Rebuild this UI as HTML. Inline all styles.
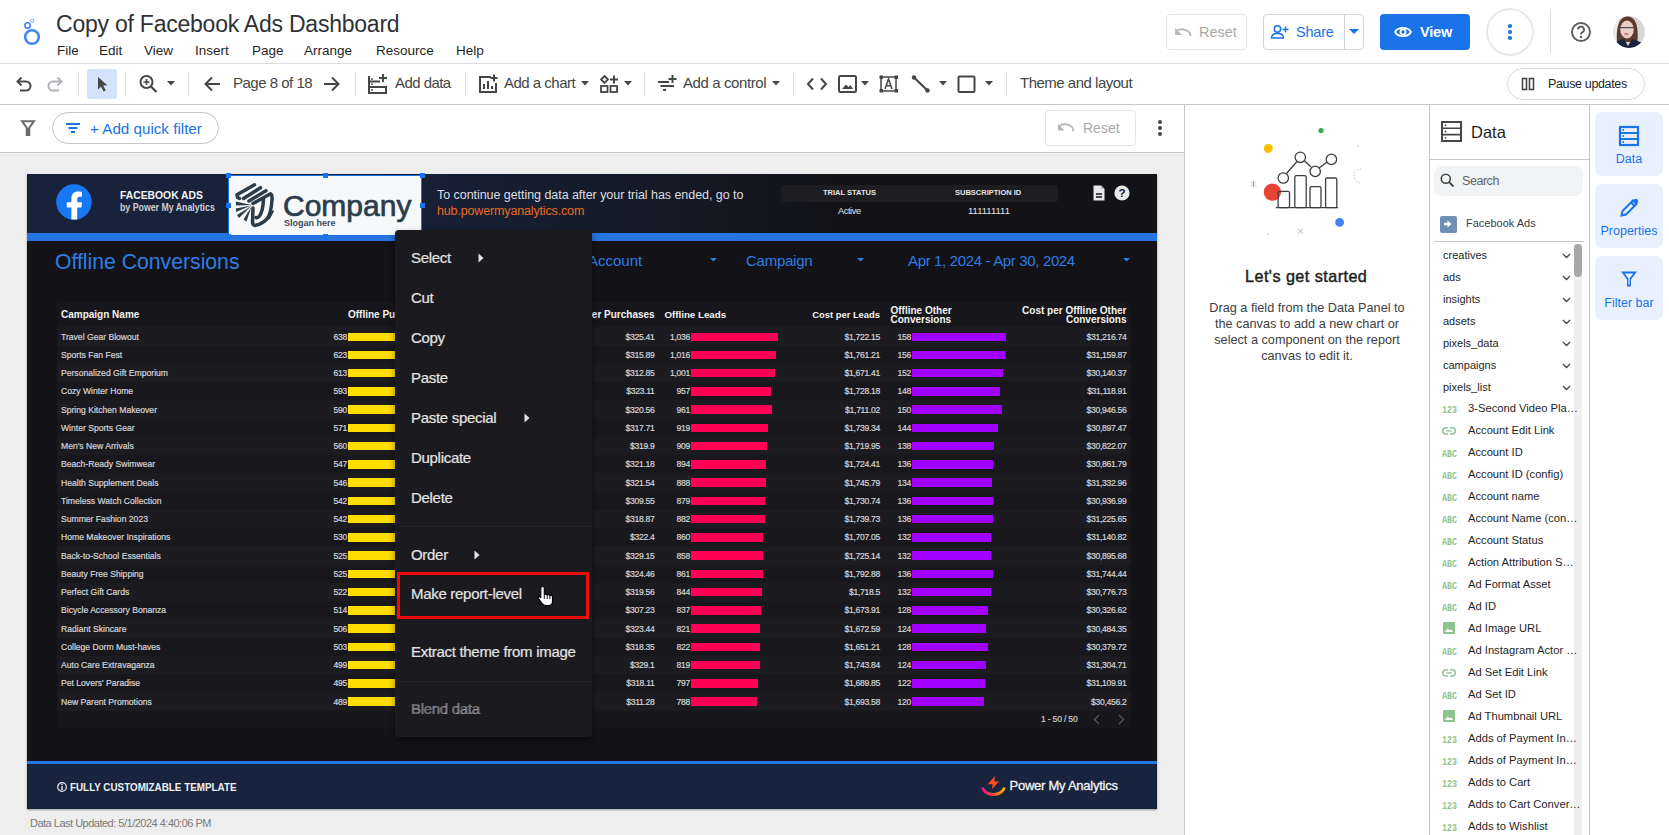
<!DOCTYPE html>
<html><head><meta charset="utf-8">
<style>
*{box-sizing:border-box;margin:0;padding:0}
html,body{width:1669px;height:835px;overflow:hidden;background:#fff;font-family:"Liberation Sans",sans-serif;color:#1f1f1f}
.a{position:absolute;white-space:nowrap;line-height:1}
svg{position:absolute;overflow:visible}
.tb{color:#444746;font-size:15px}
.sep{position:absolute;width:1px;background:#dadce0;top:72px;height:24px}
.hline{position:absolute;height:1px}
.vline{position:absolute;width:1px;background:#c4c7c5}
.r{text-align:right}
.t{color:#d4d4d8;font-size:8.6px;-webkit-text-stroke:0.2px #d4d4d8}
.h{color:#f2f2f2;font-size:9.8px;font-weight:bold}
.mi{position:absolute;left:411px;color:#e3e3e3;font-size:15px;letter-spacing:-0.3px;-webkit-text-stroke:0.2px #e3e3e3;line-height:1;white-space:nowrap}
.fl{position:absolute;left:1468px;font-size:11.2px;color:#1f1f1f;line-height:1;white-space:nowrap}
.gr{position:absolute;left:1443px;font-size:11px;color:#1f1f1f;line-height:1;white-space:nowrap}
</style></head><body>

<!-- ===== HEADER ===== -->
<svg style="left:0;top:0" width="60" height="60">
<circle cx="32" cy="37" r="6.8" fill="none" stroke="#4285f4" stroke-width="2.6"/>
<circle cx="27.5" cy="25.4" r="2.7" fill="none" stroke="#4285f4" stroke-width="1.6"/>
<circle cx="32.2" cy="20.8" r="1.6" fill="none" stroke="#8ab4f8" stroke-width="1.1"/>
</svg>
<div class="a" id="title" style="left:56px;top:13px;font-size:23px;letter-spacing:-0.23px;color:#303134">Copy of Facebook Ads Dashboard</div>
<div class="a" style="left:57px;top:43.5px;font-size:13.5px;color:#1f1f1f">File</div>
<div class="a" style="left:99px;top:43.5px;font-size:13.5px;color:#1f1f1f">Edit</div>
<div class="a" style="left:144px;top:43.5px;font-size:13.5px;color:#1f1f1f">View</div>
<div class="a" style="left:195px;top:43.5px;font-size:13.5px;color:#1f1f1f">Insert</div>
<div class="a" style="left:252px;top:43.5px;font-size:13.5px;color:#1f1f1f">Page</div>
<div class="a" style="left:304px;top:43.5px;font-size:13.5px;color:#1f1f1f">Arrange</div>
<div class="a" style="left:376px;top:43.5px;font-size:13.5px;color:#1f1f1f">Resource</div>
<div class="a" style="left:456px;top:43.5px;font-size:13.5px;color:#1f1f1f">Help</div>

<!-- header right buttons -->
<div class="a" style="left:1166px;top:14px;width:81px;height:36px;border:1px solid #e3e3e3;border-radius:4px"></div>
<svg style="left:1174px;top:26px" width="18" height="12"><path d="M2.5 4.8 a8.5 6.2 0 0 1 13.8 5.4" fill="none" stroke="#b9b9b9" stroke-width="1.9"/><path d="M1 2 V9 H8 z" fill="#b9b9b9"/></svg>
<div class="a" style="left:1199px;top:25px;font-size:14.5px;color:#a9a9a9">Reset</div>
<div class="a" style="left:1263px;top:14px;width:101px;height:36px;border:1px solid #d2d5da;border-radius:4px"></div>
<div class="a" style="left:1344px;top:14px;width:1px;height:36px;background:#d2d5da"></div>
<svg style="left:1270px;top:24px" width="20" height="16"><circle cx="7.5" cy="5" r="3.2" fill="none" stroke="#1a73e8" stroke-width="1.5"/><path d="M1.5 14 c0-3.3 3-4.5 6-4.5 s6 1.2 6 4.5 z" fill="none" stroke="#1a73e8" stroke-width="1.5"/><path d="M15.5 2.5 v6 M12.5 5.5 h6" stroke="#1a73e8" stroke-width="1.5"/></svg>
<div class="a" style="left:1296px;top:25px;font-size:14.5px;letter-spacing:-0.2px;color:#1a73e8">Share</div>
<svg style="left:1349px;top:29px" width="10" height="6"><path d="M0 0 H10 L5 5 z" fill="#1a73e8"/></svg>
<div class="a" style="left:1380px;top:14px;width:90px;height:36px;background:#1a73e8;border-radius:4px"></div>
<svg style="left:1394px;top:26px" width="18" height="12"><path d="M1 6 C4 0.5 14 0.5 17 6 C14 11.5 4 11.5 1 6 z" fill="none" stroke="#fff" stroke-width="1.7"/><circle cx="9" cy="6" r="2.6" fill="none" stroke="#fff" stroke-width="1.7"/></svg>
<div class="a" style="left:1420px;top:25px;font-size:14.5px;letter-spacing:-0.2px;color:#fff;font-weight:bold">View</div>
<div class="a" style="left:1486px;top:8px;width:48px;height:48px;border:2px solid #e8e8e8;border-radius:50%"></div>
<svg style="left:1506px;top:22px" width="8" height="20"><circle cx="4" cy="4" r="2.1" fill="#1a73e8"/><circle cx="4" cy="10" r="2.1" fill="#1a73e8"/><circle cx="4" cy="16" r="2.1" fill="#1a73e8"/></svg>
<div class="a" style="left:1550px;top:9px;width:1px;height:45px;background:#dadce0"></div>
<svg style="left:1570px;top:21px" width="22" height="22"><circle cx="11" cy="11" r="9" fill="none" stroke="#5a5c5f" stroke-width="1.9"/><path d="M8 8.6 a3 3 0 1 1 4.4 2.6 c-1 .6-1.4 1.1-1.4 2.3" fill="none" stroke="#5a5c5f" stroke-width="1.9"/><circle cx="11" cy="16" r="1.2" fill="#5a5c5f"/></svg>
<svg style="left:1613px;top:16px" width="32" height="32"><defs><clipPath id="av"><circle cx="16" cy="16" r="15.9"/></clipPath></defs><g clip-path="url(#av)"><rect width="32" height="32" fill="#d9d6d3"/><rect x="0" y="0" width="6" height="32" fill="#ecebea"/><path d="M4 26 C3 14 5 1 14 0.5 C23 0.5 25.5 10 24.5 26 z" fill="#5c3a2e"/><ellipse cx="14" cy="13.5" rx="6.8" ry="9" fill="#e8cfc8"/><path d="M7 11.7 H21" stroke="#4d4d55" stroke-width="1.2"/><ellipse cx="13.5" cy="18" rx="2.2" ry="1.2" fill="#dd7872"/><path d="M0 33 V28 C4 25 8 23 11 23 L15 30 L19 23 C23 24 27 26 32 28 V33 z" fill="#1c2340"/></g></svg>
<div class="hline" style="left:0;top:63px;width:1669px;background:#dadce0"></div>

<!-- ===== TOOLBAR ===== -->

<svg style="left:14px;top:72.5px" width="20" height="20"><path d="M3.5 8.5 H12 a4.5 4.5 0 0 1 0 9 H6" fill="none" stroke="#474a4d" stroke-width="2"/><path d="M7.5 4.5 L3.5 8.5 L7.5 12.5" fill="none" stroke="#474a4d" stroke-width="2"/></svg>
<svg style="left:45px;top:72.5px" width="20" height="20"><path d="M16.5 8.5 H8 a4.5 4.5 0 0 0 0 9 H14" fill="none" stroke="#b0b3b8" stroke-width="2"/><path d="M12.5 4.5 L16.5 8.5 L12.5 12.5" fill="none" stroke="#b0b3b8" stroke-width="2"/></svg>
<div class="sep" style="left:78px"></div>
<div class="a" style="left:87px;top:69px;width:30px;height:30px;background:#d3e3fd;border-radius:3px"></div>
<svg style="left:94px;top:76px" width="16" height="16"><path d="M4 1 V13.5 L7 10.5 L9.6 15.5 L11.8 14.5 L9.2 9.6 L13.3 9.3 z" fill="#444746"/></svg>
<div class="sep" style="left:125px"></div>
<svg style="left:138px;top:74px" width="22" height="20"><circle cx="8.5" cy="8" r="6" fill="none" stroke="#444746" stroke-width="2"/><path d="M13 12.5 L18.5 18" stroke="#444746" stroke-width="2.2"/><path d="M8.5 5 V11 M5.5 8 H11.5" stroke="#444746" stroke-width="1.7"/></svg>
<svg style="left:167px;top:81px" width="9" height="5"><path d="M0 0 H8 L4 4.5 z" fill="#444746"/></svg>
<div class="sep" style="left:188px"></div>
<svg style="left:202px;top:74px" width="20" height="20"><path d="M18 10 H4 M10 3.5 L3.5 10 L10 16.5" fill="none" stroke="#444746" stroke-width="2"/></svg>
<div class="a tb" style="left:233px;top:75px;font-size:15px;letter-spacing:-0.5px">Page 8 of 18</div>
<svg style="left:322px;top:74px" width="20" height="20"><path d="M2 10 H16 M10 3.5 L16.5 10 L10 16.5" fill="none" stroke="#444746" stroke-width="2"/></svg>
<div class="sep" style="left:355px"></div>
<svg style="left:367px;top:73px" width="22" height="22"><path d="M2 3 V20 H19 V14 H2 M2 8.5 H13 M2 14 H19" fill="none" stroke="#444746" stroke-width="2"/><path d="M16 1 V9 M12 5 H20" stroke="#444746" stroke-width="2"/><circle cx="5" cy="6" r=".9" fill="#444746"/><circle cx="5" cy="11.2" r=".9" fill="#444746"/><circle cx="5" cy="17" r=".9" fill="#444746"/></svg>
<div class="a tb" style="left:395px;top:75px;font-size:15px;letter-spacing:-0.55px">Add data</div>
<div class="sep" style="left:465px"></div>
<svg style="left:478px;top:74px" width="22" height="20"><path d="M13 3 H2 V18 H18 V9" fill="none" stroke="#444746" stroke-width="2"/><path d="M6 15 V10 M10 15 V7 M14 15 V12" stroke="#444746" stroke-width="2"/><path d="M16 0.5 V7.5 M12.5 4 H19.5" stroke="#444746" stroke-width="2"/></svg>
<div class="a tb" style="left:504px;top:75px;font-size:15px;letter-spacing:-0.5px">Add a chart</div>
<svg style="left:581px;top:81px" width="9" height="5"><path d="M0 0 H8 L4 4.5 z" fill="#444746"/></svg>
<svg style="left:600px;top:75px" width="20" height="18"><path d="M4.5 1 L8 4.5 L4.5 8 L1 4.5 z" fill="none" stroke="#444746" stroke-width="1.8"/><path d="M14 0.5 V8.5 M10 4.5 H18" stroke="#444746" stroke-width="2"/><rect x="1" y="11" width="6.5" height="6" fill="none" stroke="#444746" stroke-width="1.8"/><rect x="10.5" y="11" width="6.5" height="6" fill="none" stroke="#444746" stroke-width="1.8"/></svg>
<svg style="left:624px;top:81px" width="9" height="5"><path d="M0 0 H8 L4 4.5 z" fill="#444746"/></svg>
<div class="sep" style="left:644px"></div>
<svg style="left:657px;top:74px" width="22" height="20"><path d="M1 8 H12 M3.5 12 H12 M6 16 H9" stroke="#444746" stroke-width="2"/><path d="M15.5 1 V9 M11.5 5 H19.5" stroke="#444746" stroke-width="2"/><path d="M12 12 H17" stroke="#444746" stroke-width="2"/></svg>
<div class="a tb" style="left:683px;top:75px;font-size:15px;letter-spacing:-0.4px">Add a control</div>
<svg style="left:772px;top:81px" width="9" height="5"><path d="M0 0 H8 L4 4.5 z" fill="#444746"/></svg>
<div class="sep" style="left:793px"></div>
<svg style="left:806px;top:77px" width="22" height="14"><path d="M7 1.5 L2 7 L7 12.5 M15 1.5 L20 7 L15 12.5" fill="none" stroke="#444746" stroke-width="2"/></svg>
<svg style="left:838px;top:75px" width="20" height="18"><rect x="1" y="1" width="17" height="16" rx="1.5" fill="none" stroke="#444746" stroke-width="2"/><path d="M4 14 L8 9.5 L10.5 12 L12.5 10 L15 14 z" fill="#444746"/></svg>
<svg style="left:861px;top:81px" width="9" height="5"><path d="M0 0 H8 L4 4.5 z" fill="#444746"/></svg>
<svg style="left:879px;top:75px" width="20" height="18"><rect x="2" y="2" width="15" height="14" fill="none" stroke="#444746" stroke-width="1.5"/><rect x="0.5" y="0.5" width="3.5" height="3.5" fill="#444746"/><rect x="15.5" y="0.5" width="3.5" height="3.5" fill="#444746"/><rect x="0.5" y="14" width="3.5" height="3.5" fill="#444746"/><rect x="15.5" y="14" width="3.5" height="3.5" fill="#444746"/><path d="M6 14 L9.5 4 L13 14 M7.2 10.8 H11.8" fill="none" stroke="#444746" stroke-width="1.5"/></svg>
<svg style="left:911px;top:75px" width="20" height="18"><path d="M3 2.5 L16.5 15.5" stroke="#444746" stroke-width="2.2"/><circle cx="3" cy="2.5" r="2.2" fill="#444746"/><circle cx="16.5" cy="15.5" r="2.2" fill="#444746"/></svg>
<svg style="left:939px;top:81px" width="9" height="5"><path d="M0 0 H8 L4 4.5 z" fill="#444746"/></svg>
<svg style="left:957px;top:75px" width="20" height="18"><rect x="1.5" y="1.5" width="16" height="15.5" rx="1" fill="none" stroke="#444746" stroke-width="2"/></svg>
<svg style="left:985px;top:81px" width="9" height="5"><path d="M0 0 H8 L4 4.5 z" fill="#444746"/></svg>
<div class="sep" style="left:1006px"></div>
<div class="a tb" style="left:1020px;top:75px;font-size:15px;letter-spacing:-0.5px">Theme and layout</div>
<div class="a" style="left:1507px;top:68px;width:138px;height:32px;border:1px solid #dadce0;border-radius:16px"></div>
<svg style="left:1521px;top:77px" width="14" height="14"><rect x="1.5" y="1.5" width="4" height="11" fill="none" stroke="#444746" stroke-width="1.6"/><rect x="8.5" y="1.5" width="4" height="11" fill="none" stroke="#444746" stroke-width="1.6"/></svg>
<div class="a" style="left:1548px;top:77.5px;font-size:12.5px;color:#1f1f1f;letter-spacing:-0.35px">Pause updates</div>

<div class="hline" style="left:0;top:104px;width:1669px;background:#c4c7c5"></div>



<svg style="left:20px;top:120px" width="16" height="16"><path d="M2 1.2 H14 L9.3 7.6 V15 H6.7 V7.6 z" fill="none" stroke="#6b6d70" stroke-width="2" stroke-linejoin="miter"/><rect x="6.7" y="8" width="2.6" height="7.6" fill="#6b6d70"/></svg>
<div class="a" style="left:52px;top:112px;width:167px;height:32px;border:1px solid #c4c7c5;border-radius:16px"></div>
<svg style="left:66px;top:123px" width="15" height="11"><path d="M0 1 H14 M2.5 5 H11.5 M5 9 H9" stroke="#1a73e8" stroke-width="1.8"/></svg>
<div class="a" style="left:90px;top:120.8px;font-size:15.2px;color:#1a73e8">+ Add quick filter</div>
<div class="a" style="left:1045px;top:110px;width:91px;height:36px;border:1px solid #e3e3e3;border-radius:4px"></div>
<svg style="left:1057px;top:122px" width="18" height="12"><path d="M2 4.5 a8 6 0 0 1 14 5" fill="none" stroke="#b5b5b5" stroke-width="1.8"/><path d="M1 2 V8.5 H7.5 z" fill="#b5b5b5"/></svg>
<div class="a" style="left:1083px;top:121px;font-size:14px;color:#a9a9a9">Reset</div>
<svg style="left:1156px;top:119px" width="8" height="18"><circle cx="4" cy="2.9" r="2" fill="#444746"/><circle cx="4" cy="9" r="2" fill="#444746"/><circle cx="4" cy="15" r="2" fill="#444746"/></svg>
<div class="hline" style="left:0;top:152px;width:1184px;background:#c4c7c5"></div>


<div class="a" style="left:0;top:153px;width:1184px;height:682px;background:#eeeeee"></div>
<div class="a" style="left:27px;top:174px;width:1130px;height:635px;background:#131317;box-shadow:0 1px 2px rgba(0,0,0,.35)"></div>
<div class="a" style="left:27px;top:174px;width:1130px;height:59px;background:linear-gradient(90deg,#18233b 0%,#18233b 25%,#141a28 55%,#131317 72%,#131317 100%)"></div>
<div class="a" style="left:27px;top:233px;width:1130px;height:8px;background:#2574e0"></div>
<div class="a" style="left:27px;top:761px;width:1130px;height:3px;background:#2574e0"></div>
<div class="a" style="left:27px;top:764px;width:1130px;height:45px;background:#18243e"></div>
<div class="a" style="left:30px;top:818px;font-size:11px;letter-spacing:-0.5px;color:#7a7a7a">Data Last Updated: 5/1/2024 4:40:06 PM</div>


<svg style="left:56px;top:184px" width="36" height="36"><circle cx="18" cy="18" r="17.8" fill="#1877f2"/><path d="M21.2 35.6 V23.5 H25.4 L26 18.3 H21.2 V15.3 C21.2 13.8 21.8 12.8 23.8 12.8 H26 V8 C25.4 7.8 23.8 7.6 22 7.6 C18 7.6 15.4 10 15.4 14.3 V18.3 H10.8 V23.5 H15.4 V35.6 z" fill="#fff"/></svg>
<div class="a" style="left:120px;top:189px;font-size:11.7px;font-weight:bold;transform:scaleX(0.885);transform-origin:0 0;color:#f4f5f7">FACEBOOK ADS</div>
<div class="a" style="left:120px;top:202.5px;font-size:10.4px;font-weight:bold;transform:scaleX(0.845);transform-origin:0 0;color:#c9ced8">by Power My Analytics</div>
<div class="a" style="left:228px;top:175px;width:194px;height:61px;background:#f7f8fa;border:1px solid #1a73e8"></div>
<svg style="left:230px;top:178px" width="50" height="54"><g fill="none" stroke="#2b3d4a" stroke-width="3.5" stroke-linecap="round" stroke-linejoin="round">
<path d="M24.5 6.8 L7 16.8 L7.6 19.5 L9.5 20.5"/><path d="M30.5 9.7 L13.5 20.5"/><path d="M36 12.8 L19 23"/>
<path d="M23 25.5 L40.5 15.8 Q42.5 17 42 22 Q41 36 37 41 Q32 46 25 47.5 Q22.5 47 22.5 44 L23 30"/>
<path d="M33.5 21 Q33 33 29.5 38 Q27.5 40.5 26 39.5"/>
<path d="M42.5 33.5 L39 40" stroke-width="2.6"/>
</g><g fill="#2b3d4a"><path d="M21.3 27 L6 23.5 L5.8 27.5 z"/><path d="M21.3 27.5 L5.8 30.5 L6 34 z"/><path d="M21.3 28 L7 37 L9 40 z"/><path d="M21.5 28.5 L13.5 41.5 L16.5 43.5 z"/></g></svg>
<div class="a" style="left:283px;top:190.5px;font-size:30px;-webkit-text-stroke:0.7px #2b3d4a;color:#2b3d4a">Company</div>
<div class="a" style="left:284px;top:219px;font-size:9px;font-weight:bold;color:#3d4b57">Slogan here</div>

<div class="a" style="left:225.5px;top:172.5px;width:5px;height:5px;background:#1a73e8"></div>
<div class="a" style="left:322.5px;top:172.5px;width:5px;height:5px;background:#1a73e8"></div>
<div class="a" style="left:419.5px;top:172.5px;width:5px;height:5px;background:#1a73e8"></div>
<div class="a" style="left:225.5px;top:203.0px;width:5px;height:5px;background:#1a73e8"></div>
<div class="a" style="left:419.5px;top:203.0px;width:5px;height:5px;background:#1a73e8"></div>
<div class="a" style="left:225.5px;top:233.5px;width:5px;height:5px;background:#1a73e8"></div>
<div class="a" style="left:322.5px;top:233.5px;width:5px;height:5px;background:#1a73e8"></div>
<div class="a" style="left:419.5px;top:233.5px;width:5px;height:5px;background:#1a73e8"></div>

<div class="a" style="left:437px;top:188.5px;font-size:12.5px;letter-spacing:-0.05px;color:#dcdee3">To continue getting data after your trial has ended, go to</div>
<div class="a" style="left:437px;top:204.5px;font-size:12.5px;letter-spacing:-0.15px;color:#ea6a25">hub.powermyanalytics.com</div>
<div class="a" style="left:781px;top:185px;width:277px;height:17px;background:#1d1d22;border-radius:3px"></div>
<div class="a" style="left:823px;top:189px;font-size:7.5px;font-weight:bold;color:#e6e6e6">TRIAL STATUS</div>
<div class="a" style="left:955px;top:189px;font-size:7.5px;font-weight:bold;color:#e6e6e6">SUBSCRIPTION ID</div>
<div class="a" style="left:838px;top:207px;font-size:9.2px;letter-spacing:-0.4px;color:#e6e6e6">Active</div>
<div class="a" style="left:968px;top:206.2px;font-size:9.5px;color:#e6e6e6">111111111</div>
<svg style="left:1093px;top:185px" width="12" height="16"><path d="M0.5 0.5 H8 L11.5 4 V15.5 H0.5 z" fill="#e9e9e9"/><path d="M8 0.5 V4 H11.5" fill="#bbb"/><path d="M3 9 H9 M3 12 H9" stroke="#131317" stroke-width="1.4"/></svg>
<svg style="left:1114px;top:185px" width="16" height="16"><circle cx="8" cy="8" r="7.6" fill="#e9e9e9"/><text x="8" y="12.3" font-size="11.5" font-weight="bold" font-family="Liberation Sans" text-anchor="middle" fill="#131317">?</text></svg>


<div class="a" style="left:55px;top:251px;font-size:21.2px;color:#2e7de2">Offline Conversions</div>
<div class="a" style="left:588px;top:252.7px;font-size:15px;letter-spacing:0px;color:#2e7de2">Account</div>
<svg style="left:710px;top:258px" width="8" height="4"><path d="M0 0 H7 L3.5 3.5 z" fill="#2e7de2"/></svg>
<div class="a" style="left:746px;top:252.7px;font-size:15px;letter-spacing:-0.25px;color:#2e7de2">Campaign</div>
<svg style="left:857px;top:258px" width="8" height="4"><path d="M0 0 H7 L3.5 3.5 z" fill="#2e7de2"/></svg>
<div class="a" style="left:908px;top:252.7px;font-size:15px;letter-spacing:-0.35px;color:#2e7de2">Apr 1, 2024 - Apr 30, 2024</div>
<svg style="left:1123px;top:258px" width="8" height="4"><path d="M0 0 H7 L3.5 3.5 z" fill="#2e7de2"/></svg>

<div class="a" style="left:57px;top:302px;width:1074px;height:426px;background:#17171b;border-radius:3px"></div>
<div class="a h" style="left:61px;top:310.1px;font-size:10px">Campaign Name</div>
<div class="a h" style="left:348px;top:310.1px;font-size:10px">Offline Purchases</div>
<div class="a h r" style="left:554.7px;width:100px;top:310.1px;font-size:10px">Cost per Purchases</div>
<div class="a h" style="left:664.4px;top:310.3px;font-size:9.75px">Offline Leads</div>
<div class="a h r" style="left:760px;width:120px;top:309.5px;font-size:9.4px">Cost per Leads</div>
<div class="a h" style="left:890.5px;top:307.3px;font-size:10px;line-height:8.6px">Offline Other<br>Conversions</div>
<div class="a h r" style="left:980px;width:146.5px;top:307.3px;font-size:10px;line-height:8.6px">Cost per Offline Other<br>Conversions</div>
<div class="a" style="left:57px;top:327.40px;width:1074px;height:18.25px;background:#1b1b20"></div>
<div class="a t" style="left:61px;top:332.60px;">Travel Gear Blowout</div>
<div class="a t r" style="left:297px;width:50px;top:332.60px;letter-spacing:-0.3px">638</div>
<div class="a" style="left:348.4px;top:332.50px;width:60px;height:8.5px;background:#ffdd00"></div>
<div class="a t r" style="left:574.5px;width:80px;top:332.60px;letter-spacing:-0.3px">$325.41</div>
<div class="a t r" style="left:620px;width:70px;top:332.60px;letter-spacing:-0.3px">1,036</div>
<div class="a" style="left:691.2px;top:332.50px;width:86.8px;height:8.5px;background:#ff0055"></div>
<div class="a t r" style="left:800px;width:80px;top:332.60px;letter-spacing:-0.3px">$1,722.15</div>
<div class="a t r" style="left:860px;width:51px;top:332.60px;letter-spacing:-0.3px">158</div>
<div class="a" style="left:912.1px;top:332.50px;width:94.3px;height:8.5px;background:#a100ff"></div>
<div class="a t r" style="left:1026.5px;width:100px;top:332.60px;letter-spacing:-0.3px">$31,216.74</div>
<div class="a" style="left:57px;top:345.64px;width:1074px;height:18.25px;background:#18181c"></div>
<div class="a t" style="left:61px;top:350.84px;">Sports Fan Fest</div>
<div class="a t r" style="left:297px;width:50px;top:350.84px;letter-spacing:-0.3px">623</div>
<div class="a" style="left:348.4px;top:350.75px;width:60px;height:8.5px;background:#ffdd00"></div>
<div class="a t r" style="left:574.5px;width:80px;top:350.84px;letter-spacing:-0.3px">$315.89</div>
<div class="a t r" style="left:620px;width:70px;top:350.84px;letter-spacing:-0.3px">1,016</div>
<div class="a" style="left:691.2px;top:350.75px;width:85.1px;height:8.5px;background:#ff0055"></div>
<div class="a t r" style="left:800px;width:80px;top:350.84px;letter-spacing:-0.3px">$1,761.21</div>
<div class="a t r" style="left:860px;width:51px;top:350.84px;letter-spacing:-0.3px">156</div>
<div class="a" style="left:912.1px;top:350.75px;width:93.1px;height:8.5px;background:#a100ff"></div>
<div class="a t r" style="left:1026.5px;width:100px;top:350.84px;letter-spacing:-0.3px">$31,159.87</div>
<div class="a" style="left:57px;top:363.89px;width:1074px;height:18.25px;background:#1b1b20"></div>
<div class="a t" style="left:61px;top:369.09px;">Personalized Gift Emporium</div>
<div class="a t r" style="left:297px;width:50px;top:369.09px;letter-spacing:-0.3px">613</div>
<div class="a" style="left:348.4px;top:368.99px;width:60px;height:8.5px;background:#ffdd00"></div>
<div class="a t r" style="left:574.5px;width:80px;top:369.09px;letter-spacing:-0.3px">$312.85</div>
<div class="a t r" style="left:620px;width:70px;top:369.09px;letter-spacing:-0.3px">1,001</div>
<div class="a" style="left:691.2px;top:368.99px;width:83.9px;height:8.5px;background:#ff0055"></div>
<div class="a t r" style="left:800px;width:80px;top:369.09px;letter-spacing:-0.3px">$1,671.41</div>
<div class="a t r" style="left:860px;width:51px;top:369.09px;letter-spacing:-0.3px">152</div>
<div class="a" style="left:912.1px;top:368.99px;width:90.7px;height:8.5px;background:#a100ff"></div>
<div class="a t r" style="left:1026.5px;width:100px;top:369.09px;letter-spacing:-0.3px">$30,140.37</div>
<div class="a" style="left:57px;top:382.13px;width:1074px;height:18.25px;background:#18181c"></div>
<div class="a t" style="left:61px;top:387.33px;">Cozy Winter Home</div>
<div class="a t r" style="left:297px;width:50px;top:387.33px;letter-spacing:-0.3px">593</div>
<div class="a" style="left:348.4px;top:387.24px;width:60px;height:8.5px;background:#ffdd00"></div>
<div class="a t r" style="left:574.5px;width:80px;top:387.33px;letter-spacing:-0.3px">$323.11</div>
<div class="a t r" style="left:620px;width:70px;top:387.33px;letter-spacing:-0.3px">957</div>
<div class="a" style="left:691.2px;top:387.24px;width:80.2px;height:8.5px;background:#ff0055"></div>
<div class="a t r" style="left:800px;width:80px;top:387.33px;letter-spacing:-0.3px">$1,728.18</div>
<div class="a t r" style="left:860px;width:51px;top:387.33px;letter-spacing:-0.3px">148</div>
<div class="a" style="left:912.1px;top:387.24px;width:88.4px;height:8.5px;background:#a100ff"></div>
<div class="a t r" style="left:1026.5px;width:100px;top:387.33px;letter-spacing:-0.3px">$31,118.91</div>
<div class="a" style="left:57px;top:400.38px;width:1074px;height:18.25px;background:#1b1b20"></div>
<div class="a t" style="left:61px;top:405.58px;">Spring Kitchen Makeover</div>
<div class="a t r" style="left:297px;width:50px;top:405.58px;letter-spacing:-0.3px">590</div>
<div class="a" style="left:348.4px;top:405.48px;width:60px;height:8.5px;background:#ffdd00"></div>
<div class="a t r" style="left:574.5px;width:80px;top:405.58px;letter-spacing:-0.3px">$320.56</div>
<div class="a t r" style="left:620px;width:70px;top:405.58px;letter-spacing:-0.3px">961</div>
<div class="a" style="left:691.2px;top:405.48px;width:80.5px;height:8.5px;background:#ff0055"></div>
<div class="a t r" style="left:800px;width:80px;top:405.58px;letter-spacing:-0.3px">$1,711.02</div>
<div class="a t r" style="left:860px;width:51px;top:405.58px;letter-spacing:-0.3px">150</div>
<div class="a" style="left:912.1px;top:405.48px;width:89.5px;height:8.5px;background:#a100ff"></div>
<div class="a t r" style="left:1026.5px;width:100px;top:405.58px;letter-spacing:-0.3px">$30,946.56</div>
<div class="a" style="left:57px;top:418.62px;width:1074px;height:18.25px;background:#18181c"></div>
<div class="a t" style="left:61px;top:423.82px;">Winter Sports Gear</div>
<div class="a t r" style="left:297px;width:50px;top:423.82px;letter-spacing:-0.3px">571</div>
<div class="a" style="left:348.4px;top:423.73px;width:60px;height:8.5px;background:#ffdd00"></div>
<div class="a t r" style="left:574.5px;width:80px;top:423.82px;letter-spacing:-0.3px">$317.71</div>
<div class="a t r" style="left:620px;width:70px;top:423.82px;letter-spacing:-0.3px">919</div>
<div class="a" style="left:691.2px;top:423.73px;width:77.0px;height:8.5px;background:#ff0055"></div>
<div class="a t r" style="left:800px;width:80px;top:423.82px;letter-spacing:-0.3px">$1,739.34</div>
<div class="a t r" style="left:860px;width:51px;top:423.82px;letter-spacing:-0.3px">144</div>
<div class="a" style="left:912.1px;top:423.73px;width:86.0px;height:8.5px;background:#a100ff"></div>
<div class="a t r" style="left:1026.5px;width:100px;top:423.82px;letter-spacing:-0.3px">$30,897.47</div>
<div class="a" style="left:57px;top:436.87px;width:1074px;height:18.25px;background:#1b1b20"></div>
<div class="a t" style="left:61px;top:442.07px;">Men's New Arrivals</div>
<div class="a t r" style="left:297px;width:50px;top:442.07px;letter-spacing:-0.3px">560</div>
<div class="a" style="left:348.4px;top:441.97px;width:60px;height:8.5px;background:#ffdd00"></div>
<div class="a t r" style="left:574.5px;width:80px;top:442.07px;letter-spacing:-0.3px">$319.9</div>
<div class="a t r" style="left:620px;width:70px;top:442.07px;letter-spacing:-0.3px">909</div>
<div class="a" style="left:691.2px;top:441.97px;width:76.2px;height:8.5px;background:#ff0055"></div>
<div class="a t r" style="left:800px;width:80px;top:442.07px;letter-spacing:-0.3px">$1,719.95</div>
<div class="a t r" style="left:860px;width:51px;top:442.07px;letter-spacing:-0.3px">138</div>
<div class="a" style="left:912.1px;top:441.97px;width:82.4px;height:8.5px;background:#a100ff"></div>
<div class="a t r" style="left:1026.5px;width:100px;top:442.07px;letter-spacing:-0.3px">$30,822.07</div>
<div class="a" style="left:57px;top:455.12px;width:1074px;height:18.25px;background:#18181c"></div>
<div class="a t" style="left:61px;top:460.31px;">Beach-Ready Swimwear</div>
<div class="a t r" style="left:297px;width:50px;top:460.31px;letter-spacing:-0.3px">547</div>
<div class="a" style="left:348.4px;top:460.22px;width:60px;height:8.5px;background:#ffdd00"></div>
<div class="a t r" style="left:574.5px;width:80px;top:460.31px;letter-spacing:-0.3px">$321.18</div>
<div class="a t r" style="left:620px;width:70px;top:460.31px;letter-spacing:-0.3px">894</div>
<div class="a" style="left:691.2px;top:460.22px;width:74.9px;height:8.5px;background:#ff0055"></div>
<div class="a t r" style="left:800px;width:80px;top:460.31px;letter-spacing:-0.3px">$1,724.41</div>
<div class="a t r" style="left:860px;width:51px;top:460.31px;letter-spacing:-0.3px">136</div>
<div class="a" style="left:912.1px;top:460.22px;width:81.2px;height:8.5px;background:#a100ff"></div>
<div class="a t r" style="left:1026.5px;width:100px;top:460.31px;letter-spacing:-0.3px">$30,861.79</div>
<div class="a" style="left:57px;top:473.36px;width:1074px;height:18.25px;background:#1b1b20"></div>
<div class="a t" style="left:61px;top:478.56px;">Health Supplement Deals</div>
<div class="a t r" style="left:297px;width:50px;top:478.56px;letter-spacing:-0.3px">546</div>
<div class="a" style="left:348.4px;top:478.46px;width:60px;height:8.5px;background:#ffdd00"></div>
<div class="a t r" style="left:574.5px;width:80px;top:478.56px;letter-spacing:-0.3px">$321.54</div>
<div class="a t r" style="left:620px;width:70px;top:478.56px;letter-spacing:-0.3px">888</div>
<div class="a" style="left:691.2px;top:478.46px;width:74.4px;height:8.5px;background:#ff0055"></div>
<div class="a t r" style="left:800px;width:80px;top:478.56px;letter-spacing:-0.3px">$1,745.79</div>
<div class="a t r" style="left:860px;width:51px;top:478.56px;letter-spacing:-0.3px">134</div>
<div class="a" style="left:912.1px;top:478.46px;width:80.0px;height:8.5px;background:#a100ff"></div>
<div class="a t r" style="left:1026.5px;width:100px;top:478.56px;letter-spacing:-0.3px">$31,332.96</div>
<div class="a" style="left:57px;top:491.61px;width:1074px;height:18.25px;background:#18181c"></div>
<div class="a t" style="left:61px;top:496.81px;">Timeless Watch Collection</div>
<div class="a t r" style="left:297px;width:50px;top:496.81px;letter-spacing:-0.3px">542</div>
<div class="a" style="left:348.4px;top:496.71px;width:60px;height:8.5px;background:#ffdd00"></div>
<div class="a t r" style="left:574.5px;width:80px;top:496.81px;letter-spacing:-0.3px">$309.55</div>
<div class="a t r" style="left:620px;width:70px;top:496.81px;letter-spacing:-0.3px">879</div>
<div class="a" style="left:691.2px;top:496.71px;width:73.7px;height:8.5px;background:#ff0055"></div>
<div class="a t r" style="left:800px;width:80px;top:496.81px;letter-spacing:-0.3px">$1,730.74</div>
<div class="a t r" style="left:860px;width:51px;top:496.81px;letter-spacing:-0.3px">136</div>
<div class="a" style="left:912.1px;top:496.71px;width:81.2px;height:8.5px;background:#a100ff"></div>
<div class="a t r" style="left:1026.5px;width:100px;top:496.81px;letter-spacing:-0.3px">$30,936.99</div>
<div class="a" style="left:57px;top:509.85px;width:1074px;height:18.25px;background:#1b1b20"></div>
<div class="a t" style="left:61px;top:515.05px;">Summer Fashion 2023</div>
<div class="a t r" style="left:297px;width:50px;top:515.05px;letter-spacing:-0.3px">542</div>
<div class="a" style="left:348.4px;top:514.95px;width:60px;height:8.5px;background:#ffdd00"></div>
<div class="a t r" style="left:574.5px;width:80px;top:515.05px;letter-spacing:-0.3px">$318.87</div>
<div class="a t r" style="left:620px;width:70px;top:515.05px;letter-spacing:-0.3px">882</div>
<div class="a" style="left:691.2px;top:514.95px;width:73.9px;height:8.5px;background:#ff0055"></div>
<div class="a t r" style="left:800px;width:80px;top:515.05px;letter-spacing:-0.3px">$1,739.73</div>
<div class="a t r" style="left:860px;width:51px;top:515.05px;letter-spacing:-0.3px">136</div>
<div class="a" style="left:912.1px;top:514.95px;width:81.2px;height:8.5px;background:#a100ff"></div>
<div class="a t r" style="left:1026.5px;width:100px;top:515.05px;letter-spacing:-0.3px">$31,225.65</div>
<div class="a" style="left:57px;top:528.10px;width:1074px;height:18.25px;background:#18181c"></div>
<div class="a t" style="left:61px;top:533.30px;">Home Makeover Inspirations</div>
<div class="a t r" style="left:297px;width:50px;top:533.30px;letter-spacing:-0.3px">530</div>
<div class="a" style="left:348.4px;top:533.20px;width:60px;height:8.5px;background:#ffdd00"></div>
<div class="a t r" style="left:574.5px;width:80px;top:533.30px;letter-spacing:-0.3px">$322.4</div>
<div class="a t r" style="left:620px;width:70px;top:533.30px;letter-spacing:-0.3px">860</div>
<div class="a" style="left:691.2px;top:533.20px;width:72.1px;height:8.5px;background:#ff0055"></div>
<div class="a t r" style="left:800px;width:80px;top:533.30px;letter-spacing:-0.3px">$1,707.05</div>
<div class="a t r" style="left:860px;width:51px;top:533.30px;letter-spacing:-0.3px">132</div>
<div class="a" style="left:912.1px;top:533.20px;width:78.8px;height:8.5px;background:#a100ff"></div>
<div class="a t r" style="left:1026.5px;width:100px;top:533.30px;letter-spacing:-0.3px">$31,140.82</div>
<div class="a" style="left:57px;top:546.34px;width:1074px;height:18.25px;background:#1b1b20"></div>
<div class="a t" style="left:61px;top:551.54px;">Back-to-School Essentials</div>
<div class="a t r" style="left:297px;width:50px;top:551.54px;letter-spacing:-0.3px">525</div>
<div class="a" style="left:348.4px;top:551.44px;width:60px;height:8.5px;background:#ffdd00"></div>
<div class="a t r" style="left:574.5px;width:80px;top:551.54px;letter-spacing:-0.3px">$329.15</div>
<div class="a t r" style="left:620px;width:70px;top:551.54px;letter-spacing:-0.3px">858</div>
<div class="a" style="left:691.2px;top:551.44px;width:71.9px;height:8.5px;background:#ff0055"></div>
<div class="a t r" style="left:800px;width:80px;top:551.54px;letter-spacing:-0.3px">$1,725.14</div>
<div class="a t r" style="left:860px;width:51px;top:551.54px;letter-spacing:-0.3px">132</div>
<div class="a" style="left:912.1px;top:551.44px;width:78.8px;height:8.5px;background:#a100ff"></div>
<div class="a t r" style="left:1026.5px;width:100px;top:551.54px;letter-spacing:-0.3px">$30,895.68</div>
<div class="a" style="left:57px;top:564.59px;width:1074px;height:18.25px;background:#18181c"></div>
<div class="a t" style="left:61px;top:569.79px;">Beauty Free Shipping</div>
<div class="a t r" style="left:297px;width:50px;top:569.79px;letter-spacing:-0.3px">525</div>
<div class="a" style="left:348.4px;top:569.69px;width:60px;height:8.5px;background:#ffdd00"></div>
<div class="a t r" style="left:574.5px;width:80px;top:569.79px;letter-spacing:-0.3px">$324.46</div>
<div class="a t r" style="left:620px;width:70px;top:569.79px;letter-spacing:-0.3px">861</div>
<div class="a" style="left:691.2px;top:569.69px;width:72.2px;height:8.5px;background:#ff0055"></div>
<div class="a t r" style="left:800px;width:80px;top:569.79px;letter-spacing:-0.3px">$1,792.88</div>
<div class="a t r" style="left:860px;width:51px;top:569.79px;letter-spacing:-0.3px">136</div>
<div class="a" style="left:912.1px;top:569.69px;width:81.2px;height:8.5px;background:#a100ff"></div>
<div class="a t r" style="left:1026.5px;width:100px;top:569.79px;letter-spacing:-0.3px">$31,744.44</div>
<div class="a" style="left:57px;top:582.83px;width:1074px;height:18.25px;background:#1b1b20"></div>
<div class="a t" style="left:61px;top:588.03px;">Perfect Gift Cards</div>
<div class="a t r" style="left:297px;width:50px;top:588.03px;letter-spacing:-0.3px">522</div>
<div class="a" style="left:348.4px;top:587.93px;width:60px;height:8.5px;background:#ffdd00"></div>
<div class="a t r" style="left:574.5px;width:80px;top:588.03px;letter-spacing:-0.3px">$319.56</div>
<div class="a t r" style="left:620px;width:70px;top:588.03px;letter-spacing:-0.3px">844</div>
<div class="a" style="left:691.2px;top:587.93px;width:70.7px;height:8.5px;background:#ff0055"></div>
<div class="a t r" style="left:800px;width:80px;top:588.03px;letter-spacing:-0.3px">$1,718.5</div>
<div class="a t r" style="left:860px;width:51px;top:588.03px;letter-spacing:-0.3px">132</div>
<div class="a" style="left:912.1px;top:587.93px;width:78.8px;height:8.5px;background:#a100ff"></div>
<div class="a t r" style="left:1026.5px;width:100px;top:588.03px;letter-spacing:-0.3px">$30,776.73</div>
<div class="a" style="left:57px;top:601.08px;width:1074px;height:18.25px;background:#18181c"></div>
<div class="a t" style="left:61px;top:606.28px;">Bicycle Accessory Bonanza</div>
<div class="a t r" style="left:297px;width:50px;top:606.28px;letter-spacing:-0.3px">514</div>
<div class="a" style="left:348.4px;top:606.18px;width:60px;height:8.5px;background:#ffdd00"></div>
<div class="a t r" style="left:574.5px;width:80px;top:606.28px;letter-spacing:-0.3px">$307.23</div>
<div class="a t r" style="left:620px;width:70px;top:606.28px;letter-spacing:-0.3px">837</div>
<div class="a" style="left:691.2px;top:606.18px;width:70.1px;height:8.5px;background:#ff0055"></div>
<div class="a t r" style="left:800px;width:80px;top:606.28px;letter-spacing:-0.3px">$1,673.91</div>
<div class="a t r" style="left:860px;width:51px;top:606.28px;letter-spacing:-0.3px">128</div>
<div class="a" style="left:912.1px;top:606.18px;width:76.4px;height:8.5px;background:#a100ff"></div>
<div class="a t r" style="left:1026.5px;width:100px;top:606.28px;letter-spacing:-0.3px">$30,326.62</div>
<div class="a" style="left:57px;top:619.32px;width:1074px;height:18.25px;background:#1b1b20"></div>
<div class="a t" style="left:61px;top:624.52px;">Radiant Skincare</div>
<div class="a t r" style="left:297px;width:50px;top:624.52px;letter-spacing:-0.3px">506</div>
<div class="a" style="left:348.4px;top:624.42px;width:60px;height:8.5px;background:#ffdd00"></div>
<div class="a t r" style="left:574.5px;width:80px;top:624.52px;letter-spacing:-0.3px">$323.44</div>
<div class="a t r" style="left:620px;width:70px;top:624.52px;letter-spacing:-0.3px">821</div>
<div class="a" style="left:691.2px;top:624.42px;width:68.8px;height:8.5px;background:#ff0055"></div>
<div class="a t r" style="left:800px;width:80px;top:624.52px;letter-spacing:-0.3px">$1,672.59</div>
<div class="a t r" style="left:860px;width:51px;top:624.52px;letter-spacing:-0.3px">124</div>
<div class="a" style="left:912.1px;top:624.42px;width:74.0px;height:8.5px;background:#a100ff"></div>
<div class="a t r" style="left:1026.5px;width:100px;top:624.52px;letter-spacing:-0.3px">$30,484.35</div>
<div class="a" style="left:57px;top:637.57px;width:1074px;height:18.25px;background:#18181c"></div>
<div class="a t" style="left:61px;top:642.77px;">College Dorm Must-haves</div>
<div class="a t r" style="left:297px;width:50px;top:642.77px;letter-spacing:-0.3px">503</div>
<div class="a" style="left:348.4px;top:642.67px;width:60px;height:8.5px;background:#ffdd00"></div>
<div class="a t r" style="left:574.5px;width:80px;top:642.77px;letter-spacing:-0.3px">$318.35</div>
<div class="a t r" style="left:620px;width:70px;top:642.77px;letter-spacing:-0.3px">822</div>
<div class="a" style="left:691.2px;top:642.67px;width:68.9px;height:8.5px;background:#ff0055"></div>
<div class="a t r" style="left:800px;width:80px;top:642.77px;letter-spacing:-0.3px">$1,651.21</div>
<div class="a t r" style="left:860px;width:51px;top:642.77px;letter-spacing:-0.3px">128</div>
<div class="a" style="left:912.1px;top:642.67px;width:76.4px;height:8.5px;background:#a100ff"></div>
<div class="a t r" style="left:1026.5px;width:100px;top:642.77px;letter-spacing:-0.3px">$30,379.72</div>
<div class="a" style="left:57px;top:655.81px;width:1074px;height:18.25px;background:#1b1b20"></div>
<div class="a t" style="left:61px;top:661.01px;">Auto Care Extravaganza</div>
<div class="a t r" style="left:297px;width:50px;top:661.01px;letter-spacing:-0.3px">499</div>
<div class="a" style="left:348.4px;top:660.91px;width:60px;height:8.5px;background:#ffdd00"></div>
<div class="a t r" style="left:574.5px;width:80px;top:661.01px;letter-spacing:-0.3px">$329.1</div>
<div class="a t r" style="left:620px;width:70px;top:661.01px;letter-spacing:-0.3px">819</div>
<div class="a" style="left:691.2px;top:660.91px;width:68.6px;height:8.5px;background:#ff0055"></div>
<div class="a t r" style="left:800px;width:80px;top:661.01px;letter-spacing:-0.3px">$1,743.84</div>
<div class="a t r" style="left:860px;width:51px;top:661.01px;letter-spacing:-0.3px">124</div>
<div class="a" style="left:912.1px;top:660.91px;width:74.0px;height:8.5px;background:#a100ff"></div>
<div class="a t r" style="left:1026.5px;width:100px;top:661.01px;letter-spacing:-0.3px">$31,304.71</div>
<div class="a" style="left:57px;top:674.06px;width:1074px;height:18.25px;background:#18181c"></div>
<div class="a t" style="left:61px;top:679.26px;">Pet Lovers' Paradise</div>
<div class="a t r" style="left:297px;width:50px;top:679.26px;letter-spacing:-0.3px">495</div>
<div class="a" style="left:348.4px;top:679.16px;width:60px;height:8.5px;background:#ffdd00"></div>
<div class="a t r" style="left:574.5px;width:80px;top:679.26px;letter-spacing:-0.3px">$318.11</div>
<div class="a t r" style="left:620px;width:70px;top:679.26px;letter-spacing:-0.3px">797</div>
<div class="a" style="left:691.2px;top:679.16px;width:66.8px;height:8.5px;background:#ff0055"></div>
<div class="a t r" style="left:800px;width:80px;top:679.26px;letter-spacing:-0.3px">$1,689.85</div>
<div class="a t r" style="left:860px;width:51px;top:679.26px;letter-spacing:-0.3px">122</div>
<div class="a" style="left:912.1px;top:679.16px;width:72.8px;height:8.5px;background:#a100ff"></div>
<div class="a t r" style="left:1026.5px;width:100px;top:679.26px;letter-spacing:-0.3px">$31,109.91</div>
<div class="a" style="left:57px;top:692.30px;width:1074px;height:18.25px;background:#1b1b20"></div>
<div class="a t" style="left:61px;top:697.50px;">New Parent Promotions</div>
<div class="a t r" style="left:297px;width:50px;top:697.50px;letter-spacing:-0.3px">489</div>
<div class="a" style="left:348.4px;top:697.40px;width:60px;height:8.5px;background:#ffdd00"></div>
<div class="a t r" style="left:574.5px;width:80px;top:697.50px;letter-spacing:-0.3px">$311.28</div>
<div class="a t r" style="left:620px;width:70px;top:697.50px;letter-spacing:-0.3px">788</div>
<div class="a" style="left:691.2px;top:697.40px;width:66.0px;height:8.5px;background:#ff0055"></div>
<div class="a t r" style="left:800px;width:80px;top:697.50px;letter-spacing:-0.3px">$1,693.58</div>
<div class="a t r" style="left:860px;width:51px;top:697.50px;letter-spacing:-0.3px">120</div>
<div class="a" style="left:912.1px;top:697.40px;width:71.6px;height:8.5px;background:#a100ff"></div>
<div class="a t r" style="left:1026.5px;width:100px;top:697.50px;letter-spacing:-0.3px">$30,456.2</div>
<div class="a t" style="left:1041px;top:715px;font-size:8.6px;letter-spacing:-0.2px;color:#c8c8cc">1 - 50 / 50</div>
<svg style="left:1093px;top:714px" width="8" height="11"><path d="M6 1 L1.5 5.5 L6 10" fill="none" stroke="#55565c" stroke-width="1.3"/></svg>
<svg style="left:1117px;top:714px" width="8" height="11"><path d="M2 1 L6.5 5.5 L2 10" fill="none" stroke="#55565c" stroke-width="1.3"/></svg>

<svg style="left:57px;top:782px" width="10" height="10"><circle cx="5" cy="5" r="4.3" fill="none" stroke="#e8e8ea" stroke-width="1.2"/><path d="M5 4 V8" stroke="#e8e8ea" stroke-width="1.5"/><circle cx="5" cy="2.4" r=".8" fill="#e8e8ea"/></svg>
<div class="a" style="left:70px;top:782px;font-size:11px;font-weight:bold;transform:scaleX(0.895);transform-origin:0 0;color:#eef0f3">FULLY CUSTOMIZABLE TEMPLATE</div>
<svg style="left:981px;top:775px" width="26" height="22"><defs><linearGradient id="pg" x1="0" x2="1"><stop offset="0" stop-color="#e8168c"/><stop offset=".5" stop-color="#ff4d2a"/><stop offset="1" stop-color="#ffb300"/></linearGradient></defs><path d="M1.5 12.6 A11 8 0 0 0 23.3 12.6" fill="none" stroke="url(#pg)" stroke-width="2.8"/><path d="M13.9 1.1 L6.7 9.3 H11.6 L11 14.1 L18.2 6.6 H13.4 z" fill="#ff4a22"/></svg>
<div class="a" style="left:1009.5px;top:779px;font-size:13px;letter-spacing:-0.25px;-webkit-text-stroke:0.3px #f2f3f5;color:#f2f3f5">Power My Analytics</div>


<div class="a" style="left:395px;top:230px;width:197px;height:507px;background:#1b1b1f;border-radius:4px;box-shadow:0 3px 6px rgba(0,0,0,.45)"></div>
<div class="a" style="left:395px;top:526px;width:197px;height:1px;background:#232328"></div>
<div class="a" style="left:395px;top:681px;width:197px;height:1px;background:#232328"></div>

<div class="mi" style="top:250px">Select</div>
<svg style="left:478px;top:253px" width="6" height="10"><path d="M0.5 0.5 L5.5 5 L0.5 9.5 z" fill="#e3e3e3"/></svg>
<div class="mi" style="top:290px">Cut</div>
<div class="mi" style="top:330px">Copy</div>
<div class="mi" style="top:370px">Paste</div>
<div class="mi" style="top:410px">Paste special</div>
<svg style="left:524px;top:413px" width="6" height="10"><path d="M0.5 0.5 L5.5 5 L0.5 9.5 z" fill="#e3e3e3"/></svg>
<div class="mi" style="top:450px">Duplicate</div>
<div class="mi" style="top:490.4px">Delete</div>
<div class="mi" style="top:547.4px">Order</div>
<svg style="left:474px;top:550.4px" width="6" height="10"><path d="M0.5 0.5 L5.5 5 L0.5 9.5 z" fill="#e3e3e3"/></svg>
<div class="mi" style="top:586.4px">Make report-level</div>
<div class="mi" style="top:643.8px">Extract theme from image</div>
<div class="mi" style="top:701.3px;color:#65656a">Blend data</div>
<div class="a" style="left:396.5px;top:572.3px;width:192.5px;height:46.5px;border:3px solid #ee0b0b"></div>
<svg style="left:537px;top:585px" width="18" height="22"><path d="M5.5 1.5 C6.7 1.5 7.3 2.3 7.3 3.3 V9.5 C7.8 9 9.8 8.9 10.2 10 C10.8 9.4 12.6 9.5 12.9 10.6 C13.6 10.1 15.5 10.4 15.5 12 V16 C15.5 18.5 14 20.5 11.5 20.5 H9 C7 20.5 6 19.5 4.8 18 L1.4 13.3 C0.8 12.4 1.8 11.2 2.9 11.9 L3.8 12.6 V3.3 C3.8 2.3 4.4 1.5 5.5 1.5 z" fill="#fff" stroke="#000" stroke-width="1.1" stroke-linejoin="round"/><path d="M7.3 10 V14 M10.2 10.2 V14 M12.9 10.8 V14" stroke="#000" stroke-width="0.9"/></svg>
<div class="vline" style="left:1184px;top:105px;height:730px"></div>

<svg style="left:1240px;top:115px" width="130" height="130">
<circle cx="81" cy="15.6" r="2.6" fill="#34a853"/>
<circle cx="28.3" cy="33.5" r="4.5" fill="#fbbc04"/>
<circle cx="99.6" cy="107.4" r="4.4" fill="#4285f4"/>
<circle cx="32.4" cy="77.1" r="8.7" fill="#ea4335"/>
<g fill="none" stroke="#3c4043" stroke-width="1.3">
<rect x="38.1" y="76.3" width="11.4" height="16.3" rx="1.5"/>
<rect x="54.8" y="60.7" width="11.4" height="31.9" rx="1.5"/>
<rect x="70" y="71.6" width="11" height="21" rx="1.5"/>
<rect x="85.6" y="63" width="11.2" height="29.6" rx="1.5"/>
<path d="M35.8 92.6 H98.1"/>
<path d="M46.5 58.5 L57 46.5 M64.3 45.5 L71 52 M79.2 53 L87 47"/>
<circle cx="43.3" cy="63" r="5.2"/><circle cx="60.3" cy="42.3" r="5.2"/><circle cx="75.2" cy="56.4" r="5.2"/><circle cx="91.4" cy="44.4" r="5.2"/>
</g>
<g stroke="#9aa0a6" stroke-width="0.8"><path d="M11 66.5 l5 5 M16 66.5 l-5 5 M13.5 65.5 v7"/><path d="M58 113.5 l5 5 M63 113.5 l-5 5"/></g>
<path d="M121 54 a7 7 0 0 0 0 14" fill="none" stroke="#9aa0a6" stroke-width="0.8" stroke-dasharray="1 1.5"/>
<circle cx="118" cy="31" r="1" fill="#dadce0"/><circle cx="28" cy="119" r="1" fill="#dadce0"/>
</svg>
<div class="a" style="left:1245px;top:268px;font-size:16.2px;letter-spacing:0.45px;-webkit-text-stroke:0.45px #1f1f1f;color:#1f1f1f">Let's get started</div>
<div class="a" style="left:1186px;top:300px;width:242px;text-align:center;font-size:12.7px;line-height:16px;color:#3c4043;white-space:normal">Drag a field from the Data Panel to<br>the canvas to add a new chart or<br>select a component on the report<br>canvas to edit it.</div>
<div class="vline" style="left:1429px;top:105px;height:730px"></div>

<svg style="left:1441px;top:121px" width="21" height="21"><rect x="1" y="1" width="19" height="19" fill="none" stroke="#444746" stroke-width="2"/><path d="M1 7.3 H20 M1 13.6 H20" stroke="#444746" stroke-width="1.6"/><circle cx="4.5" cy="4.2" r=".9" fill="#444746"/><circle cx="4.5" cy="10.5" r=".9" fill="#444746"/><circle cx="4.5" cy="16.8" r=".9" fill="#444746"/></svg>
<div class="a" style="left:1471px;top:124px;font-size:16.5px;color:#1f1f1f">Data</div>
<div class="hline" style="left:1430px;top:159px;width:159px;background:#c4c7c5"></div>
<div class="a" style="left:1434px;top:166px;width:149px;height:30px;background:#f1f3f4;border-radius:8px"></div>
<svg style="left:1440px;top:173px" width="15" height="15"><circle cx="5.8" cy="5.8" r="4.5" fill="none" stroke="#444746" stroke-width="1.6"/><path d="M9 9 L13.5 13.5" stroke="#444746" stroke-width="1.8"/></svg>
<div class="a" style="left:1462px;top:175px;font-size:12.5px;letter-spacing:-0.45px;color:#5f6368">Search</div>
<div class="a" style="left:1439.5px;top:215.5px;width:17px;height:17px;background:#6f8fb8;border-radius:2px"></div>
<svg style="left:1443px;top:219px" width="10" height="10"><path d="M1 3.8 H4.5 V1.5 L8.5 5 L4.5 8.5 V6.2 H1 z" fill="#fff"/></svg>
<div class="a" style="left:1466px;top:218px;font-size:11px;color:#3c4043">Facebook Ads</div>
<div class="hline" style="left:1434px;top:241px;width:150px;background:#c4c7c5"></div>
<div class="a" style="left:1574px;top:244px;width:8px;height:591px;background:#efefef"></div>
<div class="a" style="left:1574px;top:244px;width:8px;height:33px;background:#a8a8a8;border-radius:4px"></div>
<div class="gr" style="top:250px">creatives</div>
<svg style="left:1561.5px;top:252.5px" width="10" height="6"><path d="M1 1 L4.5 4.5 L8 1" fill="none" stroke="#444746" stroke-width="1.3"/></svg>
<div class="gr" style="top:272px">ads</div>
<svg style="left:1561.5px;top:274.5px" width="10" height="6"><path d="M1 1 L4.5 4.5 L8 1" fill="none" stroke="#444746" stroke-width="1.3"/></svg>
<div class="gr" style="top:294px">insights</div>
<svg style="left:1561.5px;top:296.5px" width="10" height="6"><path d="M1 1 L4.5 4.5 L8 1" fill="none" stroke="#444746" stroke-width="1.3"/></svg>
<div class="gr" style="top:316px">adsets</div>
<svg style="left:1561.5px;top:318.5px" width="10" height="6"><path d="M1 1 L4.5 4.5 L8 1" fill="none" stroke="#444746" stroke-width="1.3"/></svg>
<div class="gr" style="top:338px">pixels_data</div>
<svg style="left:1561.5px;top:340.5px" width="10" height="6"><path d="M1 1 L4.5 4.5 L8 1" fill="none" stroke="#444746" stroke-width="1.3"/></svg>
<div class="gr" style="top:360px">campaigns</div>
<svg style="left:1561.5px;top:362.5px" width="10" height="6"><path d="M1 1 L4.5 4.5 L8 1" fill="none" stroke="#444746" stroke-width="1.3"/></svg>
<div class="gr" style="top:382px">pixels_list</div>
<svg style="left:1561.5px;top:384.5px" width="10" height="6"><path d="M1 1 L4.5 4.5 L8 1" fill="none" stroke="#444746" stroke-width="1.3"/></svg>
<div class="a" style="left:1441.5px;top:404.7px;font-size:11px;font-family:Liberation Mono;font-weight:bold;transform:scaleX(0.76);transform-origin:0 0;color:#8fc593">123</div>
<div class="fl" style="top:402.90000000000003px">3-Second Video Pla…</div>
<svg style="left:1442px;top:426.90000000000003px" width="14" height="8"><path d="M6 0.8 H3.8 a3.1 3.1 0 0 0 0 6.2 H6 M8 0.8 H10.2 a3.1 3.1 0 0 1 0 6.2 H8" fill="none" stroke="#8fc593" stroke-width="1.6"/><path d="M4.3 3.9 H9.7" stroke="#a8d4aa" stroke-width="1.8"/></svg>
<div class="fl" style="top:424.90000000000003px">Account Edit Link</div>
<div class="a" style="left:1441.5px;top:448.7px;font-size:11px;font-family:Liberation Mono;font-weight:bold;transform:scaleX(0.76);transform-origin:0 0;color:#8fc593">ABC</div>
<div class="fl" style="top:446.90000000000003px">Account ID</div>
<div class="a" style="left:1441.5px;top:470.7px;font-size:11px;font-family:Liberation Mono;font-weight:bold;transform:scaleX(0.76);transform-origin:0 0;color:#8fc593">ABC</div>
<div class="fl" style="top:468.90000000000003px">Account ID (config)</div>
<div class="a" style="left:1441.5px;top:492.7px;font-size:11px;font-family:Liberation Mono;font-weight:bold;transform:scaleX(0.76);transform-origin:0 0;color:#8fc593">ABC</div>
<div class="fl" style="top:490.90000000000003px">Account name</div>
<div class="a" style="left:1441.5px;top:514.6999999999999px;font-size:11px;font-family:Liberation Mono;font-weight:bold;transform:scaleX(0.76);transform-origin:0 0;color:#8fc593">ABC</div>
<div class="fl" style="top:512.9px">Account Name (con…</div>
<div class="a" style="left:1441.5px;top:536.6999999999999px;font-size:11px;font-family:Liberation Mono;font-weight:bold;transform:scaleX(0.76);transform-origin:0 0;color:#8fc593">ABC</div>
<div class="fl" style="top:534.9px">Account Status</div>
<div class="a" style="left:1441.5px;top:558.6999999999999px;font-size:11px;font-family:Liberation Mono;font-weight:bold;transform:scaleX(0.76);transform-origin:0 0;color:#8fc593">ABC</div>
<div class="fl" style="top:556.9px">Action Attribution S…</div>
<div class="a" style="left:1441.5px;top:580.6999999999999px;font-size:11px;font-family:Liberation Mono;font-weight:bold;transform:scaleX(0.76);transform-origin:0 0;color:#8fc593">ABC</div>
<div class="fl" style="top:578.9px">Ad Format Asset</div>
<div class="a" style="left:1441.5px;top:602.6999999999999px;font-size:11px;font-family:Liberation Mono;font-weight:bold;transform:scaleX(0.76);transform-origin:0 0;color:#8fc593">ABC</div>
<div class="fl" style="top:600.9px">Ad ID</div>
<svg style="left:1442.8px;top:622.3px" width="12" height="12"><rect x="0" y="0" width="12" height="12" rx="1" fill="#8fc593"/><path d="M2 10 L4.8 6.5 L6.8 8.5 L8 7.2 L10 10 z" fill="#fff"/></svg>
<div class="fl" style="top:622.9px">Ad Image URL</div>
<div class="a" style="left:1441.5px;top:646.6999999999999px;font-size:11px;font-family:Liberation Mono;font-weight:bold;transform:scaleX(0.76);transform-origin:0 0;color:#8fc593">ABC</div>
<div class="fl" style="top:644.9px">Ad Instagram Actor …</div>
<svg style="left:1442px;top:668.9px" width="14" height="8"><path d="M6 0.8 H3.8 a3.1 3.1 0 0 0 0 6.2 H6 M8 0.8 H10.2 a3.1 3.1 0 0 1 0 6.2 H8" fill="none" stroke="#8fc593" stroke-width="1.6"/><path d="M4.3 3.9 H9.7" stroke="#a8d4aa" stroke-width="1.8"/></svg>
<div class="fl" style="top:666.9px">Ad Set Edit Link</div>
<div class="a" style="left:1441.5px;top:690.6999999999999px;font-size:11px;font-family:Liberation Mono;font-weight:bold;transform:scaleX(0.76);transform-origin:0 0;color:#8fc593">ABC</div>
<div class="fl" style="top:688.9px">Ad Set ID</div>
<svg style="left:1442.8px;top:710.3px" width="12" height="12"><rect x="0" y="0" width="12" height="12" rx="1" fill="#8fc593"/><path d="M2 10 L4.8 6.5 L6.8 8.5 L8 7.2 L10 10 z" fill="#fff"/></svg>
<div class="fl" style="top:710.9px">Ad Thumbnail URL</div>
<div class="a" style="left:1441.5px;top:734.6999999999999px;font-size:11px;font-family:Liberation Mono;font-weight:bold;transform:scaleX(0.76);transform-origin:0 0;color:#8fc593">123</div>
<div class="fl" style="top:732.9px">Adds of Payment In…</div>
<div class="a" style="left:1441.5px;top:756.6999999999999px;font-size:11px;font-family:Liberation Mono;font-weight:bold;transform:scaleX(0.76);transform-origin:0 0;color:#8fc593">123</div>
<div class="fl" style="top:754.9px">Adds of Payment In…</div>
<div class="a" style="left:1441.5px;top:778.6999999999999px;font-size:11px;font-family:Liberation Mono;font-weight:bold;transform:scaleX(0.76);transform-origin:0 0;color:#8fc593">123</div>
<div class="fl" style="top:776.9px">Adds to Cart</div>
<div class="a" style="left:1441.5px;top:800.6999999999999px;font-size:11px;font-family:Liberation Mono;font-weight:bold;transform:scaleX(0.76);transform-origin:0 0;color:#8fc593">123</div>
<div class="fl" style="top:798.9px">Adds to Cart Conver…</div>
<div class="a" style="left:1441.5px;top:822.6999999999999px;font-size:11px;font-family:Liberation Mono;font-weight:bold;transform:scaleX(0.76);transform-origin:0 0;color:#8fc593">123</div>
<div class="fl" style="top:820.9px">Adds to Wishlist</div>
<div class="vline" style="left:1589px;top:105px;height:730px"></div>

<div class="a" style="left:1595px;top:112px;width:68px;height:64px;background:#e8f0fe;border-radius:7px"></div>
<svg style="left:1619px;top:126px" width="20" height="20"><rect x="1" y="1" width="18" height="18" fill="none" stroke="#1a73e8" stroke-width="2.2"/><path d="M1 7 H19 M1 13 H19" stroke="#1a73e8" stroke-width="1.8"/><circle cx="4.3" cy="4" r=".9" fill="#1a73e8"/><circle cx="4.3" cy="10" r=".9" fill="#1a73e8"/><circle cx="4.3" cy="16" r=".9" fill="#1a73e8"/></svg>
<div class="a" style="left:1595px;width:68px;text-align:center;top:153px;font-size:12.5px;color:#1a73e8">Data</div>
<div class="a" style="left:1595px;top:184px;width:68px;height:64px;background:#e8f0fe;border-radius:7px"></div>
<svg style="left:1619px;top:198px" width="20" height="20"><path d="M2.5 17.5 L3.5 13 L14 2.5 L17.5 6 L7 16.5 z" fill="none" stroke="#1a73e8" stroke-width="2"/><path d="M12 4.5 L15.5 8" stroke="#1a73e8" stroke-width="2"/><path d="M14 2.5 L17.5 6 L18.5 5 a2.3 2.3 0 0 0 -3.5 -3.5 z" fill="#1a73e8"/></svg>
<div class="a" style="left:1595px;width:68px;text-align:center;top:225px;font-size:12.5px;color:#1a73e8">Properties</div>
<div class="a" style="left:1595px;top:256px;width:68px;height:64px;background:#e8f0fe;border-radius:7px"></div>
<svg style="left:1620px;top:270px" width="18" height="18"><path d="M1 1.5 H17 L11 9.5 V16.5 H7 V9.5 z" fill="#1a73e8"/><path d="M4.8 3.6 H13.2 L9.6 8.4 V14.6 H8.4 V8.4 z" fill="#e8f0fe"/></svg>
<div class="a" style="left:1595px;width:68px;text-align:center;top:297px;font-size:12.5px;color:#1a73e8">Filter bar</div>

</body></html>
